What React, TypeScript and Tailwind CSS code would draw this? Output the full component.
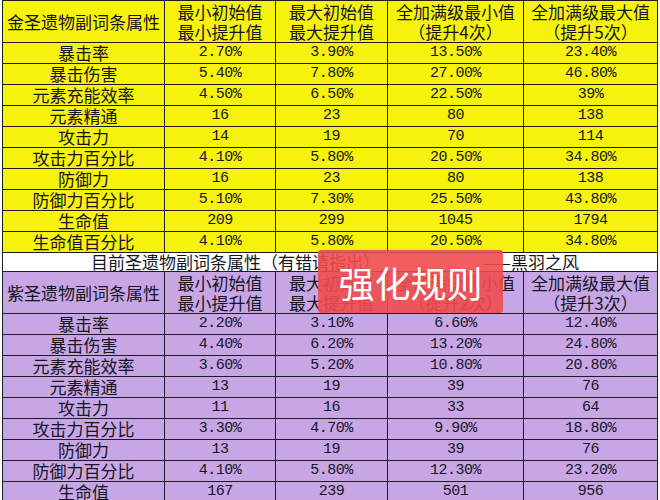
const cjk = "font-['Noto_Sans_CJK_SC','Noto_Sans',sans-serif]";
const num = "font-['Liberation_Mono','DejaVu_Sans_Mono',monospace] text-[15px] tracking-[-0.5px]";

type Row = [string, string, string, string, string];

const gold: Row[] = [
  ['暴击率', '2.70%', '3.90%', '13.50%', '23.40%'],
  ['暴击伤害', '5.40%', '7.80%', '27.00%', '46.80%'],
  ['元素充能效率', '4.50%', '6.50%', '22.50%', '39%'],
  ['元素精通', '16', '23', '80', '138'],
  ['攻击力', '14', '19', '70', '114'],
  ['攻击力百分比', '4.10%', '5.80%', '20.50%', '34.80%'],
  ['防御力', '16', '23', '80', '138'],
  ['防御力百分比', '5.10%', '7.30%', '25.50%', '43.80%'],
  ['生命值', '209', '299', '1045', '1794'],
  ['生命值百分比', '4.10%', '5.80%', '20.50%', '34.80%'],
];

const purple: Row[] = [
  ['暴击率', '2.20%', '3.10%', '6.60%', '12.40%'],
  ['暴击伤害', '4.40%', '6.20%', '13.20%', '24.80%'],
  ['元素充能效率', '3.60%', '5.20%', '10.80%', '20.80%'],
  ['元素精通', '13', '19', '39', '76'],
  ['攻击力', '11', '16', '33', '64'],
  ['攻击力百分比', '3.30%', '4.70%', '9.90%', '18.80%'],
  ['防御力', '13', '19', '39', '76'],
  ['防御力百分比', '4.10%', '5.80%', '12.30%', '23.20%'],
  ['生命值', '167', '239', '501', '956'],
];

const cell = 'border border-[#1c1c24] text-center align-middle p-0 leading-[20px]';

function Header({ title, bg, minTimes, maxTimes }: { title: string; bg: string; minTimes: number; maxTimes: number }) {
  return (
    <tr className={`${bg} h-[42px] text-[17px] ${cjk}`}>
      <td className={cell}>{title}</td>
      <td className={cell}>最小初始值<br />最小提升值</td>
      <td className={cell}>最大初始值<br />最大提升值</td>
      <td className={cell}>全加满级最小值<br />（提升{minTimes}次）</td>
      <td className={cell}>全加满级最大值<br />（提升{maxTimes}次）</td>
    </tr>
  );
}

function DataRows({ rows, bg }: { rows: Row[]; bg: string }) {
  return (
    <>
      {rows.map(r => (
        <tr key={r[0]} className={`${bg} h-[21px]`}>
          <td className={`${cell} ${cjk} text-[17px]`}>{r[0]}</td>
          {r.slice(1).map((v, i) => (
            <td key={i} className={`${cell} ${num}`}>{v}</td>
          ))}
        </tr>
      ))}
    </>
  );
}

export default function App() {
  return (
    <div className="relative w-[660px] h-[500px] overflow-hidden bg-white text-[#15151f]">
      <table className="ml-[2px] border-collapse table-fixed w-[655px]">
        <colgroup>
          <col className="w-[162px]" />
          <col className="w-[111px]" />
          <col className="w-[112px]" />
          <col className="w-[136px]" />
          <col className="w-[134px]" />
        </colgroup>
        <tbody>
          <Header title="金圣遗物副词条属性" bg="bg-[#f6f20c]" minTimes={4} maxTimes={5} />
          <DataRows rows={gold} bg="bg-[#f6f20c]" />
          <tr className="h-[19px] bg-white">
            <td colSpan={5} className={`${cell} ${cjk} text-[17px]`}>
              <div className="flex justify-between pl-[88px] pr-[78px] leading-[18px]">
                <span>目前圣遗物副词条属性（有错请指出）</span>
                <span>——黑羽之风</span>
              </div>
            </td>
          </tr>
          <Header title="紫圣遗物副词条属性" bg="bg-[#c8a6e6]" minTimes={2} maxTimes={3} />
          <DataRows rows={purple} bg="bg-[#c8a6e6]" />
        </tbody>
      </table>

      <div className={`absolute left-[318px] top-[250px] w-[185px] h-[63px] rounded-[3px] bg-[#ee4c4e]/90 flex items-center justify-center text-white text-[36px] leading-none ${cjk}`}>
        强化规则
      </div>
    </div>
  );
}
